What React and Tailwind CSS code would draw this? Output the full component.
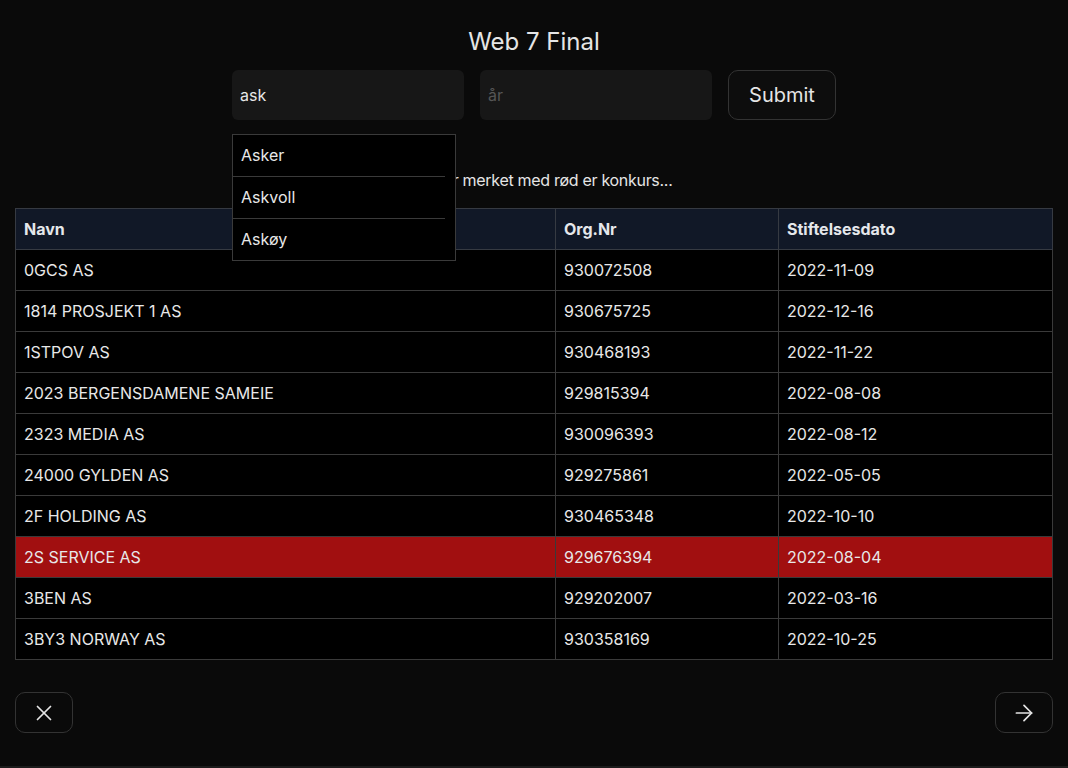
import { useState } from "react";
import { X, ArrowRight } from "lucide-react";

const rows = [
  { navn: "0GCS AS", org: "930072508", dato: "2022-11-09" },
  { navn: "1814 PROSJEKT 1 AS", org: "930675725", dato: "2022-12-16" },
  { navn: "1STPOV AS", org: "930468193", dato: "2022-11-22" },
  { navn: "2023 BERGENSDAMENE SAMEIE", org: "929815394", dato: "2022-08-08" },
  { navn: "2323 MEDIA AS", org: "930096393", dato: "2022-08-12" },
  { navn: "24000 GYLDEN AS", org: "929275861", dato: "2022-05-05" },
  { navn: "2F HOLDING AS", org: "930465348", dato: "2022-10-10" },
  { navn: "2S SERVICE AS", org: "929676394", dato: "2022-08-04", konkurs: true },
  { navn: "3BEN AS", org: "929202007", dato: "2022-03-16" },
  { navn: "3BY3 NORWAY AS", org: "930358169", dato: "2022-10-25" },
];

const suggestions = ["Asker", "Askvoll", "Askøy"];

function App() {
  const [kommune, setKommune] = useState("ask");
  const [aar, setAar] = useState("");

  return (
    <div className="h-screen bg-[#1c1c1c] font-['Inter',sans-serif] text-[#e8e8e8]">
      <div className="h-[766px] bg-[#0a0a0a] pt-[26px]">
        <h1 className="text-center text-2xl leading-8 text-[#e5e5e5]">Web 7 Final</h1>

        {/* Search form */}
        <div className="mt-3 flex justify-center gap-4">
          <div className="relative">
            <input
              value={kommune}
              onChange={(e) => setKommune(e.target.value)}
              className="h-[50px] w-[232px] rounded-md bg-[#171717] px-2 text-base text-[#e8e8e8] outline-none"
            />
            {kommune && (
              <div className="absolute left-0 top-[64px] z-10 w-[224px] border border-[#3a3a3a] bg-black">
                {suggestions.map((s) => (
                  <div
                    key={s}
                    className="h-[42px] w-[212px] border-b border-[#3a3a3a] pl-2 text-base leading-[41px] last:h-[41px] last:border-b-0"
                  >
                    {s}
                  </div>
                ))}
              </div>
            )}
          </div>
          <input
            value={aar}
            onChange={(e) => setAar(e.target.value)}
            placeholder="år"
            className="h-[50px] w-[232px] rounded-md bg-[#171717] px-2 text-base text-[#e8e8e8] outline-none placeholder:text-[#555]"
          />
          <button className="h-[50px] w-[108px] rounded-[10px] border border-[#333] bg-[#0d0d0d] text-xl text-[#e5e5e5]">
            Submit
          </button>
        </div>

        <p className="mt-12 text-center text-base leading-6 tracking-[-0.3px] text-[#e5e5e5]">
          Bedrifter merket med rød er konkurs...
        </p>

        {/* Result table */}
        <div className="mx-[15px] mt-4">
          <table className="w-full table-fixed border-collapse text-base">
            <colgroup>
              <col className="w-[540px]" />
              <col className="w-[223px]" />
              <col />
            </colgroup>
            <thead>
              <tr className="h-[41px] bg-[#111827] text-left">
                <th className="border border-[#363a42] pl-2 font-bold text-[#e5e7eb]">Navn</th>
                <th className="border border-[#363a42] pl-2 font-bold text-[#e5e7eb]">Org.Nr</th>
                <th className="border border-[#363a42] pl-2 font-bold text-[#e5e7eb]">Stiftelsesdato</th>
              </tr>
            </thead>
            <tbody>
              {rows.map((r) => (
                <tr key={r.org} className={`h-[41px] ${r.konkurs ? "bg-[#a10f10]" : "bg-black"}`}>
                  <td className="border border-[#3a3a3a] pl-2">{r.navn}</td>
                  <td className="border border-[#3a3a3a] pl-2">{r.org}</td>
                  <td className="border border-[#3a3a3a] pl-2">{r.dato}</td>
                </tr>
              ))}
            </tbody>
          </table>
        </div>

        {/* Pagination */}
        <div className="mx-[15px] mt-8 flex justify-between">
          <button className="flex h-[41px] w-[58px] items-center justify-center rounded-[10px] border border-[#333] bg-[#0a0a0a] text-[#e5e5e5]">
            <X size={26} strokeWidth={1.6} />
          </button>
          <button className="flex h-[41px] w-[58px] items-center justify-center rounded-[10px] border border-[#333] bg-[#0a0a0a] text-[#e5e5e5]">
            <ArrowRight size={26} strokeWidth={1.6} />
          </button>
        </div>
      </div>
    </div>
  );
}

export default App;
